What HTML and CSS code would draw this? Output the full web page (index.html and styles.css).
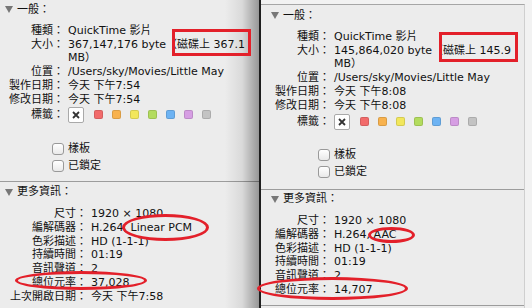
FILE: index.html
```html
<!DOCTYPE html>
<html lang="zh-Hant">
<head>
    <meta charset="UTF-8">
    <meta name="viewport" content="width=device-width, initial-scale=1.0">
    <title>影片資訊比較</title>
    <link rel="stylesheet" href="styles.css">
</head>
<body>

    <div class="screen">

        <section class="panel panel-left">
            <div class="group group-general">
                <div class="group-head"><span class="disclosure"></span>一般：</div>
                <dl class="info">
                    <dt>種類：</dt><dd>QuickTime 影片</dd>
                    <dt>大小：</dt><dd>367,147,176 byte（磁碟上 367.1<br>MB）</dd>
                    <dt>位置：</dt><dd>/Users/sky/Movies/Little May</dd>
                    <dt>製作日期：</dt><dd>今天 下午7:54</dd>
                    <dt>修改日期：</dt><dd>今天 下午7:54</dd>
                    <dt class="tag-label">標籤：</dt>
                    <dd class="tags">
                        <span class="tag-clear">
                            <svg width="8" height="8" viewBox="0 0 8 8"><path d="M1 1 L7 7 M7 1 L1 7" stroke="#333" stroke-width="1.8"/></svg>
                        </span>
                        <span class="tag red"></span>
                        <span class="tag orange"></span>
                        <span class="tag yellow"></span>
                        <span class="tag green"></span>
                        <span class="tag blue"></span>
                        <span class="tag purple"></span>
                        <span class="tag gray"></span>
                    </dd>
                </dl>
                <div class="info options">
                    <span class="checkbox"></span><span>樣板</span>
                    <span class="checkbox"></span><span>已鎖定</span>
                </div>
            </div>
            <div class="group group-more">
                <div class="group-head"><span class="disclosure"></span>更多資訊：</div>
                <dl class="info info-wide">
                    <dt>尺寸：</dt><dd>1920 × 1080</dd>
                    <dt>編解碼器：</dt><dd>H.264, Linear PCM</dd>
                    <dt>色彩描述：</dt><dd>HD (1-1-1)</dd>
                    <dt>持續時間：</dt><dd>01:19</dd>
                    <dt>音訊聲道：</dt><dd>2</dd>
                    <dt>總位元率：</dt><dd>37,028</dd>
                    <dt>上次開啟日期：</dt><dd>今天 下午7:58</dd>
                </dl>
            </div>
        </section>

        <div class="seam"></div>

        <section class="panel panel-right">
            <div class="group group-general">
                <div class="group-head"><span class="disclosure"></span>一般：</div>
                <dl class="info">
                    <dt>種類：</dt><dd>QuickTime 影片</dd>
                    <dt>大小：</dt><dd>145,864,020 byte（磁碟上 145.9<br>MB）</dd>
                    <dt>位置：</dt><dd>/Users/sky/Movies/Little May</dd>
                    <dt>製作日期：</dt><dd>今天 下午8:08</dd>
                    <dt>修改日期：</dt><dd>今天 下午8:08</dd>
                    <dt class="tag-label">標籤：</dt>
                    <dd class="tags">
                        <span class="tag-clear">
                            <svg width="8" height="8" viewBox="0 0 8 8"><path d="M1 1 L7 7 M7 1 L1 7" stroke="#333" stroke-width="1.8"/></svg>
                        </span>
                        <span class="tag red"></span>
                        <span class="tag orange"></span>
                        <span class="tag yellow"></span>
                        <span class="tag green"></span>
                        <span class="tag blue"></span>
                        <span class="tag purple"></span>
                        <span class="tag gray"></span>
                    </dd>
                </dl>
                <div class="info options">
                    <span class="checkbox"></span><span>樣板</span>
                    <span class="checkbox"></span><span>已鎖定</span>
                </div>
            </div>
            <div class="group group-more">
                <div class="group-head"><span class="disclosure"></span>更多資訊：</div>
                <dl class="info">
                    <dt>尺寸：</dt><dd>1920 × 1080</dd>
                    <dt>編解碼器：</dt><dd>H.264, AAC</dd>
                    <dt>色彩描述：</dt><dd>HD (1-1-1)</dd>
                    <dt>持續時間：</dt><dd>01:19</dd>
                    <dt>音訊聲道：</dt><dd>2</dd>
                    <dt>總位元率：</dt><dd>14,707</dd>
                </dl>
            </div>
        </section>

        <!-- red annotations drawn on top -->
        <div class="mark mark-size-left"></div>
        <div class="mark mark-size-right"></div>
        <div class="mark oval oval-codec-left"></div>
        <div class="mark oval oval-rate-left"></div>
        <div class="mark oval oval-codec-right"></div>
        <div class="mark oval oval-rate-right"></div>

    </div>

</body>
</html>
```

FILE: styles.css
```css
body {
    margin: 0;
    padding: 0;
    font-family: "DejaVu Sans", "Noto Sans CJK TC", sans-serif;
    font-size: 11px;
    color: #111;
    background-color: #f4f4f4;
}

.screen {
    position: relative;
    display: flex;
    width: 532px;
    height: 308px;
    overflow: hidden;
    background-color: #f2f2f2;
}

.panel {
    background-color: #ececec;
    line-height: 13.75px;
}

.panel-left {
    position: relative;
    width: 259px;
    padding-left: 5px;
    padding-top: 3px;
    box-sizing: border-box;
}

/* shadow of the right window falling on the left one */
.panel-left::after {
    content: "";
    position: absolute;
    top: 0;
    right: 0;
    bottom: 0;
    width: 34px;
    background: linear-gradient(to right, rgba(0, 0, 0, 0), rgba(0, 0, 0, 0.08) 50%, rgba(0, 0, 0, 0.36));
}

.seam {
    width: 2px;
    background-color: #1e1e1e;
}

.panel-right {
    width: 264px;
    margin-top: 4px;
    padding-left: 10px;
    padding-top: 4px;
    box-sizing: border-box;
    border-top: 1px solid #a6a6a6;
    border-right: 1px solid #cfcfcf;
}

.group-general {
    padding-bottom: 7px;
    border-bottom: 1px solid #9c9c9c;
}

.panel-left .group-general {
    margin-left: -5px;
    padding-left: 5px;
}

.panel-right .group-general,
.panel-right .group-more {
    margin-left: -10px;
    padding-left: 10px;
}

.panel-right .group-general {
    padding-bottom: 9px;
}

.panel-right .tags,
.panel-right .tag-label {
    margin-top: 1px;
}

.panel-right .options {
    margin-top: 16px;
}

.group-more {
    padding-top: 3px;
}

.panel-right .group-more {
    padding-top: 2px;
    padding-bottom: 8px;
    border-bottom: 1px solid #9c9c9c;
}

.group-head {
    display: flex;
    align-items: center;
    gap: 4px;
}

.disclosure {
    width: 0;
    height: 0;
    border-left: 4px solid transparent;
    border-right: 4px solid transparent;
    border-top: 7px solid #777;
}

.info {
    display: grid;
    grid-template-columns: 59px auto;
    column-gap: 4px;
    margin: 7px 0 0;
}

.group-more .info {
    margin-top: 8px;
}

.info-wide {
    grid-template-columns: 82px auto;
}

.info dt {
    text-align: right;
    white-space: nowrap;
}

.info dd {
    margin: 0;
    white-space: nowrap;
}

.tag-label,
.tags {
    height: 17px;
    display: flex;
    align-items: center;
}

.tag-label {
    justify-content: flex-end;
}

.tags {
    gap: 9px;
}

.tag-clear {
    width: 16px;
    height: 16px;
    box-sizing: border-box;
    border: 1px solid #a9a9a9;
    border-radius: 2px;
    background-color: #fff;
    display: flex;
    align-items: center;
    justify-content: center;
    margin-right: 1px;
}

.tag {
    width: 9px;
    height: 9px;
    border-radius: 2px;
    box-sizing: border-box;
    border: 1px solid rgba(0, 0, 0, 0.12);
}

.tag.red { background-color: #f26b6b; }
.tag.orange { background-color: #f8b24e; }
.tag.yellow { background-color: #f2e75c; }
.tag.green { background-color: #b3dc5e; }
.tag.blue { background-color: #6db3f3; }
.tag.purple { background-color: #d69ee3; }
.tag.gray { background-color: #c3c3c3; }

.options {
    margin-top: 17px;
    grid-auto-rows: 17px;
    align-items: center;
}

.checkbox {
    justify-self: end;
    width: 12px;
    height: 12px;
    box-sizing: border-box;
    border: 1px solid #999;
    border-radius: 3px;
    background: linear-gradient(#fff, #e9e9e9);
}

/* red annotation marks */
.mark {
    position: absolute;
    box-sizing: border-box;
    border: 3px solid #e3202a;
}

.oval {
    border-radius: 50%;
}

.mark-size-left { left: 172px; top: 29px; width: 79px; height: 27px; }
.mark-size-right { left: 439px; top: 32px; width: 79px; height: 30px; }
.oval-codec-left { left: 122px; top: 214px; width: 87px; height: 27px; }
.oval-rate-left { left: 15px; top: 271px; width: 132px; height: 19px; }
.oval-codec-right { left: 368px; top: 227px; width: 47px; height: 16px; }
.oval-rate-right { left: 257px; top: 277px; width: 151px; height: 23px; }
```
